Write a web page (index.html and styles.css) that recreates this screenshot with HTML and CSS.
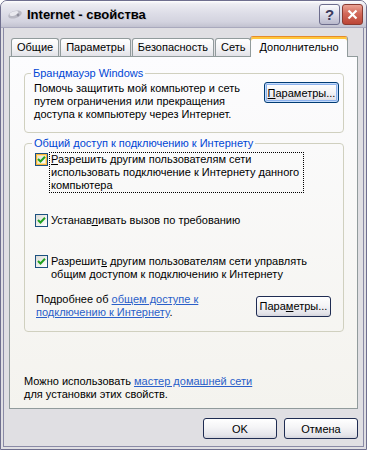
FILE: index.html
```html
<!DOCTYPE html>
<html lang="ru">
<head>
    <meta charset="UTF-8">
    <title>Internet - свойства</title>
    <link rel="stylesheet" href="styles.css">
</head>
<body>
    <div class="window">
        <div class="titlebar">
            <svg class="title-icon" width="16" height="12" viewBox="0 0 16 12">
                <ellipse cx="8" cy="6.5" rx="7" ry="3.6" transform="rotate(-18 8 6.5)" fill="#b9b9c4"/>
                <ellipse cx="7" cy="5.5" rx="4.5" ry="2" transform="rotate(-18 7 5.5)" fill="#e9e9ef"/>
                <circle cx="11" cy="7" r="1.4" fill="#8e8e9c"/>
            </svg>
            <span class="title">Internet - свойства</span>
            <div class="caption-btns">
                <button class="cap help">?</button>
                <button class="cap close">
                    <svg width="11" height="11" viewBox="0 0 11 11">
                        <path d="M1.5 1.5 L9.5 9.5 M9.5 1.5 L1.5 9.5" stroke="#fff" stroke-width="2.2"/>
                    </svg>
                </button>
            </div>
        </div>

        <div class="client">
            <div class="tabs">
                <div class="tab">Общие</div>
                <div class="tab">Параметры</div>
                <div class="tab">Безопасность</div>
                <div class="tab">Сеть</div>
                <div class="tab active">Дополнительно</div>
            </div>

            <div class="page">
                <fieldset class="group first">
                    <legend>Брандмауэр Windows</legend>
                    <div class="group-row">
                        <p>Помочь защитить мой компьютер и сеть<br>путем ограничения или прекращения<br>доступа к компьютеру через Интернет.</p>
                        <button class="btn focused"><u>П</u>араметры...</button>
                    </div>
                </fieldset>

                <fieldset class="group second">
                    <legend>Общий доступ к подключению к Интернету</legend>

                    <div class="check-row">
                        <span class="cb hover"><svg width="9" height="9" viewBox="0 0 9 9"><path d="M1 4 L3.5 6.5 L8 1.8" fill="none" stroke="#21a121" stroke-width="2"/></svg></span>
                        <span class="cb-label focus"><u>Р</u>азрешить другим пользователям сети<br>использовать подключение к Интернету данного<br>компьютера</span>
                    </div>

                    <div class="check-row row2">
                        <span class="cb"><svg width="9" height="9" viewBox="0 0 9 9"><path d="M1 4 L3.5 6.5 L8 1.8" fill="none" stroke="#21a121" stroke-width="2"/></svg></span>
                        <span class="cb-label">Устанав<u>л</u>ивать вызов по требованию</span>
                    </div>

                    <div class="check-row row3">
                        <span class="cb"><svg width="9" height="9" viewBox="0 0 9 9"><path d="M1 4 L3.5 6.5 L8 1.8" fill="none" stroke="#21a121" stroke-width="2"/></svg></span>
                        <span class="cb-label">Разрешит<u>ь</u> другим пользователям сети управлять<br>общим доступом к подключению к Интернету</span>
                    </div>

                    <div class="info-row">
                        <p>Подробнее об <a href="#">общем доступе к<br>подключению к Интернету</a>.</p>
                        <button class="btn">Пара<u>м</u>етры...</button>
                    </div>
                </fieldset>

                <p class="note">Можно использовать <a href="#">мастер домашней сети</a><br>для установки этих свойств.</p>
            </div>

            <div class="actions">
                <button class="btn">OK</button>
                <button class="btn">Отмена</button>
            </div>
        </div>
    </div>
</body>
</html>
```

FILE: styles.css
```css
* {
    margin: 0;
    padding: 0;
    box-sizing: border-box;
}
body {
    background: #fff;
    font-family: "Liberation Sans", Arial, sans-serif;
    font-size: 11px;
    line-height: 13px;
    color: #000;
}
.window {
    width: 367px;
    height: 450px;
    border: 1px solid #6f6f8f;
    border-radius: 7px 7px 0 0;
    background: #e0dfe3;
    display: flex;
    flex-direction: column;
    overflow: hidden;
}
.titlebar {
    height: 27px;
    flex: none;
    display: flex;
    align-items: center;
    padding: 0 3px 0 6px;
    background: linear-gradient(#ffffff 0, #ececf2 3px, #dedee8 45%, #d3d3df 80%, #c2c2d0 100%);
    border-bottom: 1px solid #a9a9bd;
}
.title-icon {
    margin-right: 4px;
}
.title {
    font-size: 13px;
    font-weight: bold;
    color: #000;
    text-shadow: 1px 1px 0 #c4c4d0;
}
.caption-btns {
    margin-left: auto;
    display: flex;
    gap: 2px;
}
.cap {
    width: 21px;
    height: 21px;
    border-radius: 3px;
    display: flex;
    align-items: center;
    justify-content: center;
    font-family: "Liberation Sans", Arial, sans-serif;
}
.help {
    border: 1px solid #6d6d8d;
    background: linear-gradient(#fbfbfd, #dcdce8 50%, #b9b9cc);
    color: #3a3a5c;
    font-size: 15px;
    font-weight: bold;
}
.close {
    border: 1px solid #8a3b31;
    background: linear-gradient(#eba394, #d2695a 45%, #bc4536);
}
.client {
    flex: 1;
    margin: 0 2px 2px;
    border: 1px solid #8a8aa6;
    border-top: 0;
    padding: 8px 5px 7px;
    display: flex;
    flex-direction: column;
}
.tabs {
    height: 20px;
    flex: none;
    display: flex;
    align-items: flex-end;
    padding-left: 2px;
    position: relative;
    z-index: 1;
}
.tab {
    height: 18px;
    padding: 0 5px;
    margin-right: 1px;
    border: 1px solid #919b9c;
    border-bottom: 0;
    border-radius: 3px 3px 0 0;
    background: linear-gradient(#ffffff, #f3f3f5 55%, #e2e2e8);
    line-height: 17px;
}
.tab.active {
    height: 21px;
    margin: 0 0 -1px -2px;
    padding: 0 8px;
    border-top: 1px solid #e68b2c;
    background: #fcfcfe;
    box-shadow: inset 0 2px 0 #ffc73c;
    line-height: 20px;
}
.page {
    height: 353px;
    flex: none;
    border: 1px solid #919b9c;
    background: linear-gradient(#fcfcfe, #f4f3ee);
    display: flex;
    flex-direction: column;
    padding: 0 13px 7px 14px;
}
.group {
    border: 1px solid #d0d0bf;
    border-radius: 4px;
    padding: 2px 4px 11px 9px;
}
.group legend {
    color: #0046d5;
    padding: 0 2px;
    margin-left: -3px;
    line-height: 13px;
}
.group.first {
    margin-top: 10px;
}
.group.second {
    margin-top: 4px;
    padding: 2px 4px 12px 10px;
}
.group-row {
    display: flex;
    justify-content: space-between;
    align-items: flex-start;
}
.check-row {
    display: flex;
    align-items: flex-start;
}
.row2 {
    margin-top: 20px;
}
.row3 {
    margin-top: 26px;
}
.cb {
    width: 13px;
    height: 13px;
    flex: none;
    margin-top: 1px;
    border: 1px solid #1c5180;
    background: linear-gradient(135deg, #dcdcd7, #ffffff);
    display: flex;
    align-items: center;
    justify-content: center;
}
.cb.hover {
    box-shadow: inset 0 0 0 1px #f8b33a, inset 0 0 0 2px #fde69a;
}
.cb-label {
    margin-left: 1px;
    border: 1px solid transparent;
    padding-left: 1px;
}
.cb-label.focus {
    width: 255px;
    border: 1px dotted #000;
}
.info-row {
    margin-top: 11px;
    margin-left: 1px;
    display: flex;
    justify-content: space-between;
    align-items: center;
}
.info-row .btn {
    margin-right: 8px;
}
a {
    color: #2a5fc9;
    text-decoration: underline;
}
.note {
    margin-top: auto;
}
.btn {
    width: 75px;
    height: 21px;
    border: 1px solid #1f2c52;
    border-radius: 3px;
    background: linear-gradient(#ffffff, #f4f4f6 45%, #e4e4ea 85%, #d4d4dc);
    font-family: "Liberation Sans", Arial, sans-serif;
    font-size: 11px;
    color: #000;
    flex: none;
}
.btn.focused {
    border-color: #003c74;
    box-shadow: inset 0 0 0 1px #c4dbfb, inset 0 0 0 2px #8db2ed;
}
.actions {
    margin-top: 9px;
    display: flex;
    justify-content: flex-end;
    gap: 7px;
}
.actions .btn {
    width: 74px;
}
```
